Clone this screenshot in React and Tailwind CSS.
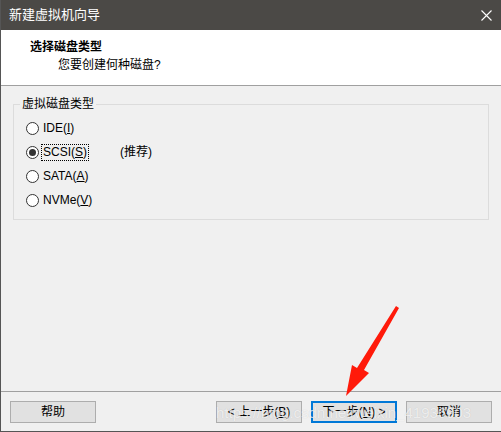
import React from 'react';

const font = { fontFamily: '"Liberation Sans", "Noto Sans CJK SC", sans-serif' };

function Radio({ checked, label, hot, rest, focus, extra }) {
    return (
        <div className="flex items-center h-[24px]">
            <span className="w-[13px] h-[13px] rounded-full border border-[#333] bg-white flex items-center justify-center">
                {checked && <span className="w-[7px] h-[7px] rounded-full bg-[#333]" />}
            </span>
            <span className={`ml-[3px] px-[1px] text-[12px] text-black leading-[15px] ${focus ? 'outline outline-1 outline-dotted outline-black' : ''}`}>
                {label}(<span className="underline">{hot}</span>){rest}
            </span>
            {extra && <span className="ml-[32px] text-[12px] text-black">{extra}</span>}
        </div>
    );
}

function Btn({ children, primary, className = '' }) {
    return (
        <div className={`h-[22px] flex items-center justify-center text-[12px] text-black bg-[#e1e1e1] whitespace-nowrap ${primary ? 'border-2 border-[#0078d7]' : 'border border-[#adadad]'} ${className}`}>
            {children}
        </div>
    );
}

export default function App() {
    return (
        <div className="relative w-[501px] h-[432px] flex bg-[#f0f0f0] overflow-hidden" style={font}>
            <div className="flex-1 flex flex-col border-l border-b border-[#555]">
                <div className="h-[30px] bg-[#4b4946] flex items-center justify-between pl-[8px] pr-[9px]">
                    <span className="text-white text-[13px]">新建虚拟机向导</span>
                    <svg width="11" height="11" viewBox="0 0 11 11">
                        <path d="M0.5 0.5 L10.5 10.5 M10.5 0.5 L0.5 10.5" stroke="#fff" strokeWidth="1.1" />
                    </svg>
                </div>
                <div className="h-[56px] bg-white border-b-[1.5px] border-[#a0a0a0] pt-[9px]">
                    <div className="pl-[29px] text-[12px] font-bold text-black leading-[16px]">选择磁盘类型</div>
                    <div className="pl-[57px] mt-[3px] text-[12px] text-black leading-[15px]">您要创建何种磁盘?</div>
                </div>
                <div className="flex-1 px-[12px] pt-[18px]">
                    <div className="relative border border-[#dcdcdc] h-[116px] w-[476px] pl-[12px] pt-[11px]">
                        <span className="absolute -top-[8px] left-[6px] px-[2px] bg-[#f0f0f0] text-[12px] leading-[15px] text-black">虚拟磁盘类型</span>
                        <Radio label="IDE" hot="I" />
                        <Radio label="SCSI" hot="S" checked focus extra="(推荐)" />
                        <Radio label="SATA" hot="A" />
                        <Radio label="NVMe" hot="V" />
                    </div>
                </div>
                <div className="h-[40px] border-t-[1.5px] border-[#a0a0a0] flex items-center pl-[9px] pr-[9px]">
                    <Btn className="w-[86px]">帮助</Btn>
                    <div className="flex-1" />
                    <Btn className="w-[86px] text-[#555]">&lt; 上一步(<span className="underline">B</span>)</Btn>
                    <Btn primary className="w-[86px] ml-[9px]">下一步(<span className="underline">N</span>) &gt;</Btn>
                    <Btn className="w-[86px] ml-[9px]">取消</Btn>
                </div>
            </div>
            <div className="w-[3px] bg-[#5c5c5c]" />
            <span className="absolute left-[216px] top-[402px] text-[15px] text-white/70 whitespace-nowrap pointer-events-none" style={{ textShadow: '0 0 1px rgba(0,0,0,0.15)' }}>
                https://blog.csdn.net/weixin_41936903
            </span>
            <svg className="absolute left-0 top-0" width="501" height="432" viewBox="0 0 501 432">
                <path d="M399 308 L364 370 L369 373 L346 396 L352 365 L357 368 L396 306 Z" fill="#ff1a0a" />
            </svg>
        </div>
    );
}
